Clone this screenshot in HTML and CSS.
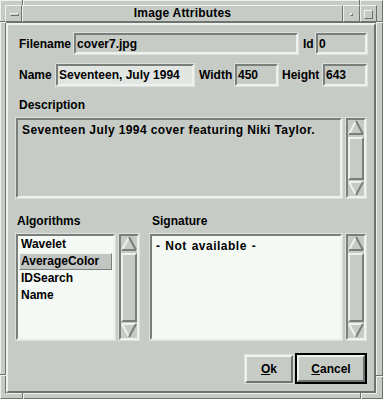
FILE: index.html
```html
<!DOCTYPE html>
<html lang="en">
<head>
    <meta charset="UTF-8">
    <title>Image Attributes</title>
    <link rel="stylesheet" href="styles.css">
</head>
<body>
<div class="window">
    <!-- frame resize marks -->
    <i class="mark mark-v mark-tl-v"></i>
    <i class="mark mark-v mark-tr-v"></i>
    <i class="mark mark-v mark-bl-v"></i>
    <i class="mark mark-v mark-br-v"></i>
    <i class="mark mark-h mark-tl-h"></i>
    <i class="mark mark-h mark-tr-h"></i>
    <i class="mark mark-h mark-bl-h"></i>
    <i class="mark mark-h mark-br-h"></i>

    <div class="titlebar">
        <div class="tbtn menu-btn"><span class="menu-glyph"></span></div>
        <div class="tbtn title">Image Attributes</div>
        <div class="tbtn min-btn"><span class="min-glyph"></span></div>
        <div class="tbtn max-btn"><span class="max-glyph"></span></div>
    </div>

    <div class="client">
        <div class="dialog">
            <!-- Filename / Id -->
            <div class="row row-top">
                <span class="lbl lbl-filename">Filename</span>
                <div class="field w-file">cover7.jpg</div>
                <span class="lbl lbl-id">Id</span>
                <div class="field w-id">0</div>
            </div>

            <!-- Name / Width / Height -->
            <div class="row row-name">
                <span class="lbl lbl-name">Name</span>
                <div class="field field-focus w-name">Seventeen, July 1994</div>
                <span class="lbl lbl-width">Width</span>
                <div class="field w-width">450</div>
                <span class="lbl lbl-height">Height</span>
                <div class="field w-height">643</div>
            </div>

            <div class="section-label">Description</div>
            <div class="desc-row">
                <div class="box desc-text">Seventeen July 1994 cover featuring Niki Taylor.</div>
                <div class="scrollbar">
                    <svg class="arrow" width="16" height="15" viewBox="0 0 16 15">
                        <line x1="1" y1="14" x2="8" y2="1" stroke="#eef2ee" stroke-width="2"/>
                        <line x1="8" y1="1" x2="15" y2="14" stroke="#7b7f7b" stroke-width="2"/>
                        <line x1="1" y1="14" x2="15" y2="14" stroke="#7b7f7b" stroke-width="2"/>
                    </svg>
                    <div class="slider"></div>
                    <svg class="arrow" width="16" height="15" viewBox="0 0 16 15">
                        <line x1="1" y1="1" x2="15" y2="1" stroke="#eef2ee" stroke-width="2"/>
                        <line x1="1" y1="1" x2="8" y2="14" stroke="#eef2ee" stroke-width="2"/>
                        <line x1="15" y1="1" x2="8" y2="14" stroke="#7b7f7b" stroke-width="2"/>
                    </svg>
                </div>
            </div>

            <div class="labels-row">
                <span class="lbl-algo">Algorithms</span>
                <span>Signature</span>
            </div>
            <div class="lists-row">
                <div class="box list algo-list">
                    <div class="item">Wavelet</div>
                    <div class="item selected">AverageColor</div>
                    <div class="item">IDSearch</div>
                    <div class="item">Name</div>
                </div>
                <div class="scrollbar">
                    <svg class="arrow" width="16" height="15" viewBox="0 0 16 15">
                        <line x1="1" y1="14" x2="8" y2="1" stroke="#eef2ee" stroke-width="2"/>
                        <line x1="8" y1="1" x2="15" y2="14" stroke="#7b7f7b" stroke-width="2"/>
                        <line x1="1" y1="14" x2="15" y2="14" stroke="#7b7f7b" stroke-width="2"/>
                    </svg>
                    <div class="slider"></div>
                    <svg class="arrow" width="16" height="15" viewBox="0 0 16 15">
                        <line x1="1" y1="1" x2="15" y2="1" stroke="#eef2ee" stroke-width="2"/>
                        <line x1="1" y1="1" x2="8" y2="14" stroke="#eef2ee" stroke-width="2"/>
                        <line x1="15" y1="1" x2="8" y2="14" stroke="#7b7f7b" stroke-width="2"/>
                    </svg>
                </div>
                <div class="box list sig-list">- Not available -</div>
                <div class="scrollbar">
                    <svg class="arrow" width="16" height="15" viewBox="0 0 16 15">
                        <line x1="1" y1="14" x2="8" y2="1" stroke="#eef2ee" stroke-width="2"/>
                        <line x1="8" y1="1" x2="15" y2="14" stroke="#7b7f7b" stroke-width="2"/>
                        <line x1="1" y1="14" x2="15" y2="14" stroke="#7b7f7b" stroke-width="2"/>
                    </svg>
                    <div class="slider"></div>
                    <svg class="arrow" width="16" height="15" viewBox="0 0 16 15">
                        <line x1="1" y1="1" x2="15" y2="1" stroke="#eef2ee" stroke-width="2"/>
                        <line x1="1" y1="1" x2="8" y2="14" stroke="#eef2ee" stroke-width="2"/>
                        <line x1="15" y1="1" x2="8" y2="14" stroke="#7b7f7b" stroke-width="2"/>
                    </svg>
                </div>
            </div>

            <!-- Ok / Cancel -->
            <div class="buttons-row">
                <button class="btn btn-ok"><u>O</u>k</button>
                <div class="default-ring">
                    <button class="btn btn-cancel"><u>C</u>ancel</button>
                </div>
            </div>
        </div>
    </div>
</div>
</body>
</html>
```

FILE: styles.css
```css
* {
    box-sizing: border-box;
}

body {
    margin: 0;
    background: #c6cbc6;
    color: #000;
    font: bold 12px "Liberation Sans", Arial, sans-serif;
}

.window {
    position: relative;
    width: 383px;
    height: 399px;
    display: flex;
    flex-direction: column;
    padding: 4px 5px 4px 4px;
    border: 1px solid;
    border-color: #eef2ee #6f736f #6f736f #eef2ee;
    background: #c6cbc6;
}

/* resize marks on the frame */
.mark {
    position: absolute;
    display: block;
}

.mark-v {
    width: 2px;
    height: 6px;
    border-left: 1px solid #6f736f;
    border-right: 1px solid #eef2ee;
}

.mark-h {
    height: 2px;
    border-top: 1px solid #6f736f;
    border-bottom: 1px solid #eef2ee;
}

.mark-tl-v { left: 21px; top: -1px; }
.mark-tr-v { left: 358px; top: -1px; }
.mark-bl-v { left: 21px; bottom: -1px; }
.mark-br-v { left: 359px; bottom: -1px; }
.mark-tl-h { left: -1px; top: 20px; width: 6px; }
.mark-tr-h { right: -1px; top: 20px; width: 7px; }
.mark-bl-h { left: -1px; top: 373px; width: 6px; }
.mark-br-h { right: -1px; top: 374px; width: 7px; }

/* title bar */
.titlebar {
    display: flex;
    height: 17px;
}

.tbtn {
    border: 1px solid;
    border-color: #eef2ee #6f736f #6f736f #eef2ee;
    width: 17px;
    position: relative;
}

.title {
    width: 321px;
    text-align: center;
    line-height: 15px;
    letter-spacing: 0.2px;
}

.menu-glyph {
    position: absolute;
    left: 4px;
    top: 7px;
    width: 9px;
    height: 3px;
    border: 1px solid;
    border-color: #eef2ee #6f736f #6f736f #eef2ee;
}

.min-glyph {
    position: absolute;
    left: 6px;
    top: 7px;
    width: 3px;
    height: 3px;
    border: 1px solid;
    border-color: #eef2ee #6f736f #6f736f #eef2ee;
}

.max-glyph {
    position: absolute;
    left: 3px;
    top: 4px;
    width: 9px;
    height: 9px;
    border: 1px solid;
    border-color: #eef2ee #6f736f #6f736f #eef2ee;
}

/* client area */
.client {
    flex: 1;
    display: flex;
    border: 1px solid;
    border-color: #6f736f #eef2ee #eef2ee #6f736f;
}

.dialog {
    flex: 1;
    display: flex;
    flex-direction: column;
    padding: 8px 0 0 11px;
    border: 2px solid;
    border-color: #eef2ee #6f736f #6f736f #eef2ee;
}

.row {
    display: flex;
    align-items: center;
    height: 21px;
}

.row-name {
    margin-top: 10px;
    height: 22px;
}

.lbl {
    display: block;
}

.lbl-filename { width: 55px; }
.lbl-id { width: 13px; margin-left: 5px; }
.lbl-name { width: 37px; }
.lbl-width { width: 36px; margin-left: 5px; }
.lbl-height { width: 41px; margin-left: 4px; }

.field {
    height: 100%;
    display: flex;
    align-items: center;
    padding-left: 1px;
    white-space: nowrap;
    overflow: hidden;
    border: 2px solid;
    border-color: #7b7f7b #eef2ee #eef2ee #7b7f7b;
    outline: 1px solid #dde1dd;
}

.field-focus {
    background: #e2e6e2;
}

.w-file { width: 224px; }
.w-id { width: 51px; }
.w-name { width: 138px; }
.w-width { width: 43px; }
.w-height { width: 44px; }

.section-label {
    margin-top: 12px;
    line-height: 14px;
}

.box {
    border: 2px solid;
    border-color: #7b7f7b #eef2ee #eef2ee #7b7f7b;
    outline: 1px solid #dde1dd;
    white-space: nowrap;
    overflow: hidden;
}

.desc-row {
    display: flex;
    gap: 4px;
    height: 80px;
    margin-top: 6px;
    margin-left: -3px;
}

.desc-text {
    width: 326px;
    padding: 3px 0 0 4px;
    line-height: 14px;
    letter-spacing: 0.4px;
}

/* scrollbars */
.scrollbar {
    width: 20px;
    display: flex;
    flex-direction: column;
    border: 2px solid;
    border-color: #7b7f7b #eef2ee #eef2ee #7b7f7b;
    outline: 1px solid #dde1dd;
}

.arrow {
    display: block;
    flex: none;
}

.slider {
    flex: 1;
    margin: 2px 0 1px;
    border: 2px solid;
    border-color: #eef2ee #7b7f7b #7b7f7b #eef2ee;
}

.labels-row {
    display: flex;
    margin-top: 16px;
    margin-left: -2px;
    line-height: 14px;
}

.lbl-algo {
    width: 135px;
}

.lists-row {
    display: flex;
    height: 106px;
    margin-top: 6px;
    margin-left: -3px;
}

.list {
    background: #f5f9f5;
}

.algo-list {
    width: 99px;
    margin-right: 4px;
}

.sig-list {
    width: 192px;
    margin: 0 4px 0 11px;
    padding: 3px 0 0 4px;
    line-height: 14px;
    letter-spacing: 0.5px;
    word-spacing: 1px;
}

.item {
    height: 17px;
    line-height: 15px;
    margin: 0 1px;
    padding-left: 1px;
    border: 1px solid transparent;
}

.item.selected {
    background: #c2c6c2;
    border-color: #eef2ee #7b7f7b #7b7f7b #eef2ee;
}

/* buttons */
.buttons-row {
    display: flex;
    justify-content: flex-end;
    align-items: flex-start;
    gap: 2px;
    margin-top: 13px;
    padding-right: 7px;
}

.btn {
    font: bold 12px "Liberation Sans", Arial, sans-serif;
    color: #000;
    background: #c6cbc6;
    border: 2px solid;
    border-color: #eef2ee #6f736f #6f736f #eef2ee;
    padding: 0;
    margin: 0;
}

.btn-ok {
    width: 48px;
    height: 28px;
    margin-top: 2px;
    outline: 1px solid #dde1dd;
}

.default-ring {
    border: 2px solid #000;
}

.btn-cancel {
    display: block;
    width: 68px;
    height: 27px;
}
```
